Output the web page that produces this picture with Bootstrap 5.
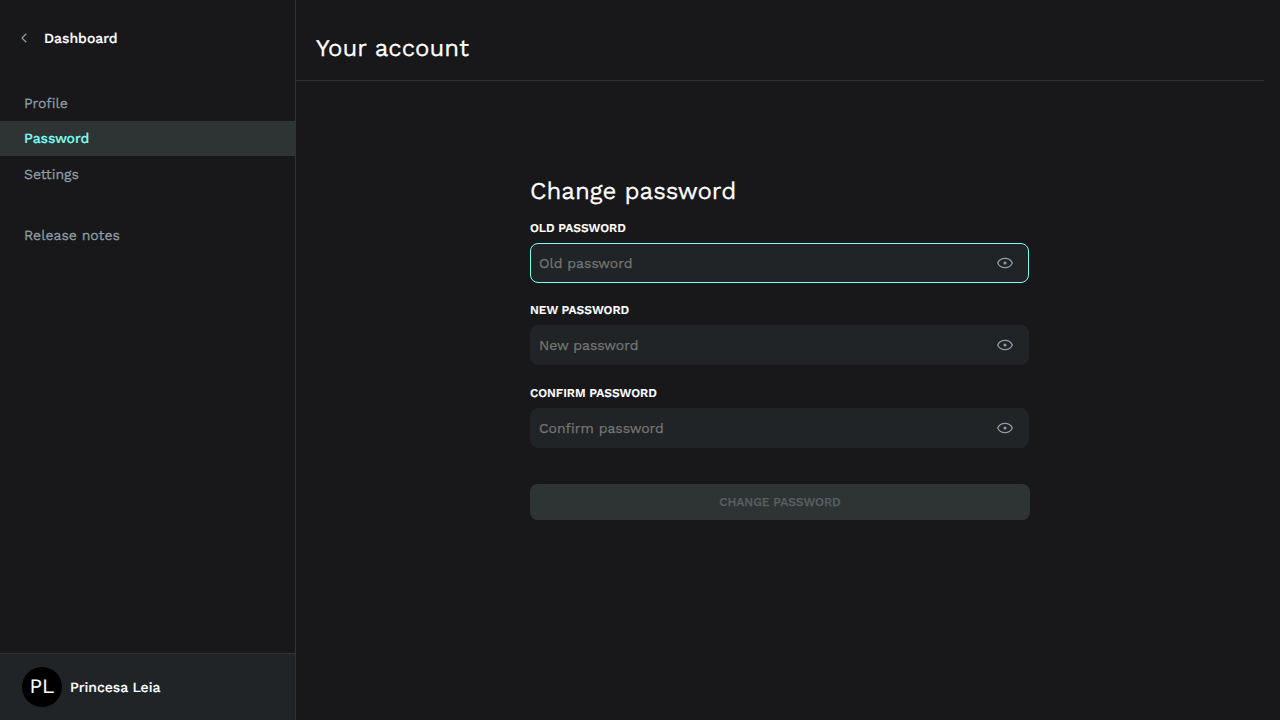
<!DOCTYPE html>
<html lang="en" data-bs-theme="dark">
<head>
<meta charset="utf-8">
<meta name="viewport" content="width=device-width, initial-scale=1">
<title>Your account</title>
<link href="https://cdn.jsdelivr.net/npm/bootstrap@5.3.0/dist/css/bootstrap.min.css" rel="stylesheet">
<style>
  body { background: #18181a; color: #fff; font-family: "Work Sans", Inter, "Liberation Sans", sans-serif; font-size: 14px; line-height: 20px; -webkit-text-stroke: .25px; text-rendering: geometricPrecision; }
  .sidebar { width: 296px; border-right: 1px solid #2e3434; }
  .back { color: #fff; height: 28px; margin: 24px 0 33px 18px; font-weight: 500; gap: 14px; -webkit-text-stroke: .2px; }
  .back span, .profile-name { padding-top: 2px; }
  .side-nav .nav-link { height: 35.5px; padding: 2px 24px 0; display: flex; align-items: center; color: #8f9da3; border-radius: 0; }
  .side-nav .nav-link.active { background: #2e3434; color: #7efff5; font-weight: 500; letter-spacing: -.08px; -webkit-text-stroke: .15px; }
  .side-nav .notes { margin-top: 25.5px; }
  .profile { height: 67px; background: #212426; border-top: 1px solid #2e3434; padding-left: 22px; font-weight: 500; letter-spacing: -.03px; -webkit-text-stroke: .15px; }
  .avatar { width: 40px; height: 40px; background: #000; font-size: 20.5px; font-weight: 400; line-height: 38px; padding: 0 0 2px; letter-spacing: 0; }
  .page-head { height: 81px; border-bottom: 1px solid #2e3434; margin-right: 16px; padding: 15px 0 0 20px; }
  .title { font-size: 24px; line-height: 32px; font-weight: 400; margin: 0; }
  .password-form { width: 500px; margin: 94px 0 0 234px; }
  .password-form .title { margin-bottom: 13px; }
  .form-label { font-size: 12px; line-height: 16px; font-weight: 600; margin: 0 0 7px; display: block; letter-spacing: -.03px; -webkit-text-stroke: .1px; }
  .field { width: 499px; height: 40px; background: #212426; border: 1px solid #212426; border-radius: 8px; padding: 0 15px 0 8px; margin-bottom: 19.4px; }
  .field.last { margin-top: 7.2px; margin-bottom: 0; }
  .field.current { border-color: #7efff5; }
  .field .form-control { background: none; border: 0; box-shadow: none; padding: 0; font-size: 14px; line-height: 20px; height: 20px; color: #fff; }
  .field .form-control::placeholder { color: #757575; opacity: 1; }
  .submit { height: 36px; margin-top: 36px; padding: 0; border: 0; border-radius: 8px; font-size: 12px; font-weight: 500; }
  .submit:disabled { background: #2e3434; color: #596063; opacity: 1; }
</style>
</head>
<body class="vh-100 d-flex overflow-hidden">
<aside class="sidebar d-flex flex-column flex-shrink-0">
  <a class="back d-flex align-items-center text-decoration-none" href="#">
    <svg width="12" height="12" viewBox="0 0 12 12" fill="none" stroke="#8f9da3" stroke-width="1.15" stroke-linecap="round" stroke-linejoin="round"><path d="M8 2 4 6l4 4"/></svg>
    <span>Dashboard</span>
  </a>
  <nav class="side-nav nav flex-column flex-nowrap flex-grow-1">
    <a class="nav-link" href="#">Profile</a>
    <a class="nav-link active" href="#">Password</a>
    <a class="nav-link" href="#">Settings</a>
    <a class="nav-link notes" href="#">Release notes</a>
  </nav>
  <div class="profile d-flex align-items-center gap-2">
    <span class="avatar rounded-circle d-flex align-items-center justify-content-center">PL</span>
    <span class="profile-name">Princesa Leia</span>
  </div>
</aside>
<main class="flex-grow-1">
  <header class="page-head d-flex align-items-center"><h1 class="title">Your account</h1></header>
  <form class="password-form">
    <h2 class="title">Change password</h2>
    <label class="form-label" for="old">OLD PASSWORD</label>
    <div class="field current d-flex align-items-center">
      <input id="old" class="form-control" type="password" placeholder="Old password">
      <svg class="flex-shrink-0" width="16" height="16" viewBox="0 0 16 16" fill="none" stroke="#8f9da3" stroke-width="1.3" stroke-linejoin="round"><path d="M.7 8C2 5 4.500 3.300 8 3.300S14 5 15.300 8c-1.300 3-3.800 4.700-7.300 4.700S2 11 .7 8Z"/><circle cx="8" cy="8" r=".9" fill="#8f9da3"/></svg>
    </div>
    <label class="form-label" for="new">NEW PASSWORD</label>
    <div class="field d-flex align-items-center">
      <input id="new" class="form-control" type="password" placeholder="New password">
      <svg class="flex-shrink-0" width="16" height="16" viewBox="0 0 16 16" fill="none" stroke="#8f9da3" stroke-width="1.3" stroke-linejoin="round"><path d="M.7 8C2 5 4.500 3.300 8 3.300S14 5 15.300 8c-1.300 3-3.800 4.700-7.300 4.700S2 11 .7 8Z"/><circle cx="8" cy="8" r=".9" fill="#8f9da3"/></svg>
    </div>
    <label class="form-label" for="confirm">CONFIRM PASSWORD</label>
    <div class="field last d-flex align-items-center">
      <input id="confirm" class="form-control" type="password" placeholder="Confirm password">
      <svg class="flex-shrink-0" width="16" height="16" viewBox="0 0 16 16" fill="none" stroke="#8f9da3" stroke-width="1.3" stroke-linejoin="round"><path d="M.7 8C2 5 4.500 3.300 8 3.300S14 5 15.300 8c-1.300 3-3.800 4.700-7.300 4.700S2 11 .7 8Z"/><circle cx="8" cy="8" r=".9" fill="#8f9da3"/></svg>
    </div>
    <button class="submit btn w-100" type="submit" disabled>CHANGE PASSWORD</button>
  </form>
</main>
<script src="https://cdn.jsdelivr.net/npm/bootstrap@5.3.0/dist/js/bootstrap.bundle.min.js"></script>
</body>
</html>
